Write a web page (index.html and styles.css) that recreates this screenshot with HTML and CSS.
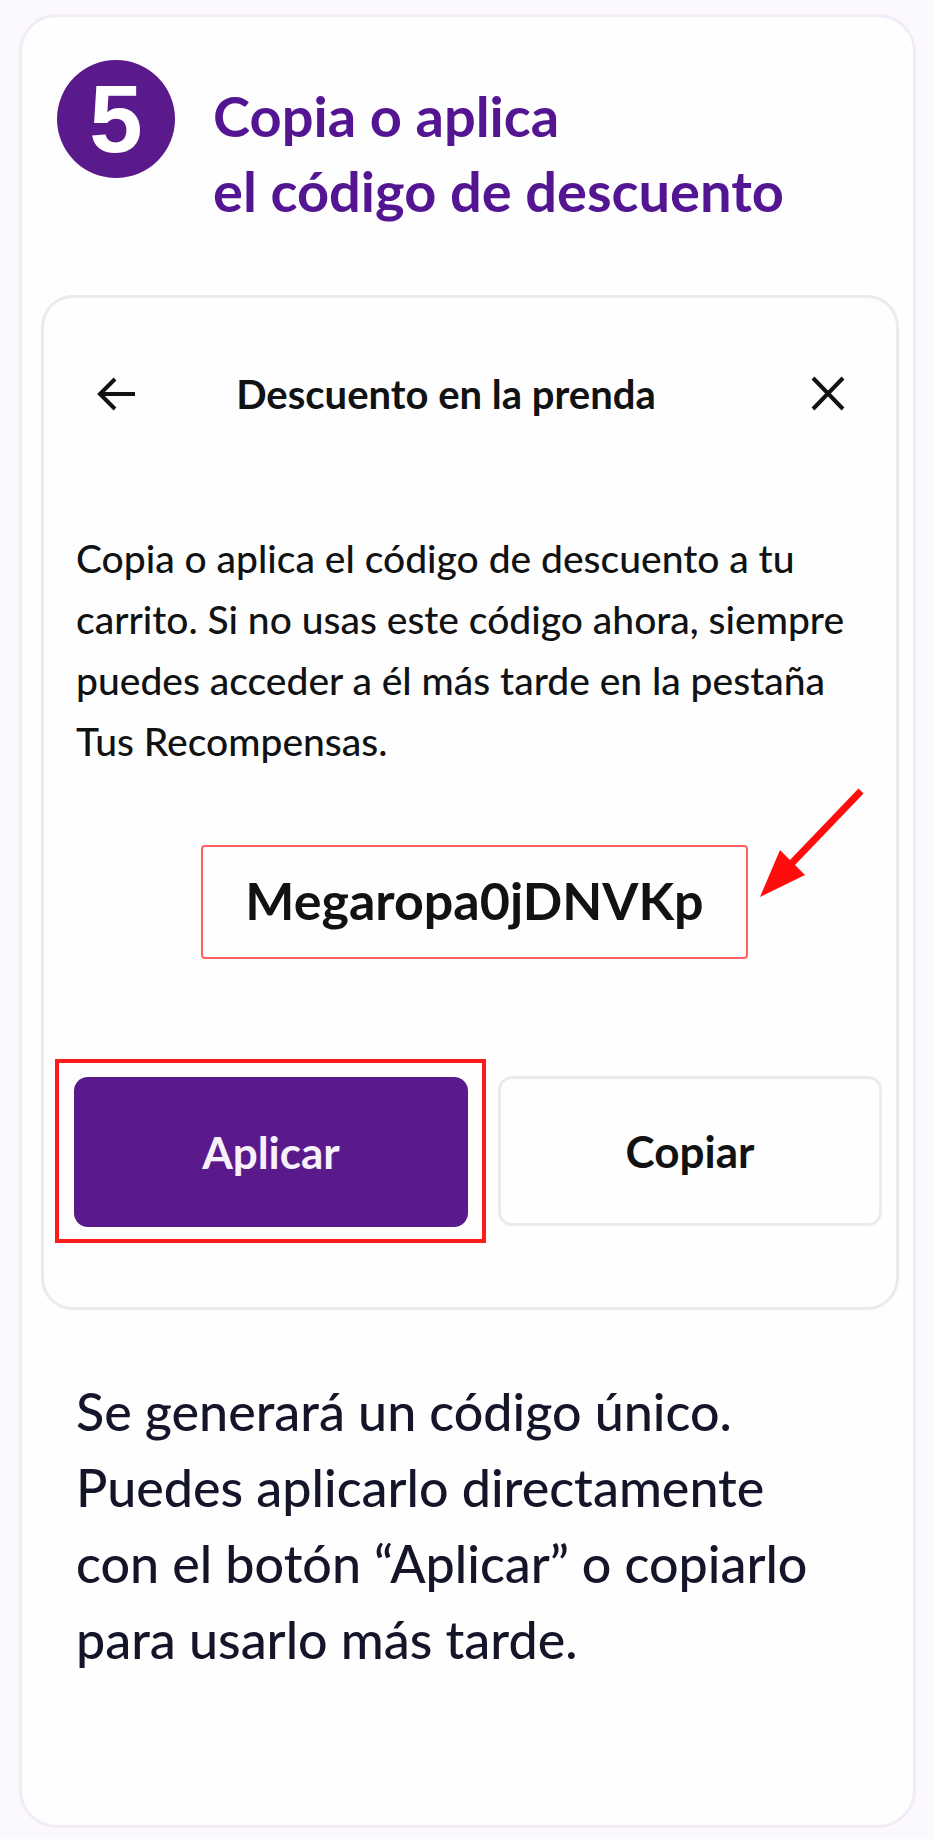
FILE: index.html
```
<!DOCTYPE html>
<html lang="es">
<head>
<meta charset="utf-8">
<meta name="viewport" content="width=device-width, initial-scale=1">
<title>Copia o aplica el código de descuento</title>
<link rel="stylesheet" href="styles.css">
</head>
<body>
<main class="step">
  <header class="step-header">
    <span class="step-number">5</span>
    <h1 class="step-title">Copia o aplica<br>el código de descuento</h1>
  </header>
  <section class="panel">
    <div class="panel-bar">
      <button class="icon-button" type="button" aria-label="Volver">
        <svg width="40" height="40" viewBox="0 0 40 40" fill="none" stroke="currentColor" stroke-width="4"><path d="M39 20H4M19 5L4 20l15 15"/></svg>
      </button>
      <h2 class="panel-title">Descuento en la prenda</h2>
      <button class="icon-button" type="button" aria-label="Cerrar">
        <svg width="40" height="40" viewBox="0 0 40 40" fill="none" stroke="currentColor" stroke-width="4"><path d="M5 4l30 31M35 4L5 35"/></svg>
      </button>
    </div>
    <p class="panel-text">Copia o aplica el código de descuento a tu<br>carrito. Si no usas este código ahora, siempre<br>puedes acceder a él más tarde en la pestaña<br>Tus Recompensas.</p>
    <div class="code-row">
      <output class="code">Megaropa0jDNVKp</output>
      <svg class="pointer" width="110" height="116" viewBox="0 0 110 116"><path d="M103 6L34 78" stroke="#ff0d0d" stroke-width="7" stroke-linecap="butt"/><path d="M2 112L22 65L34 77L47 90Z" fill="#ff0d0d"/></svg>
    </div>
    <div class="actions">
      <div class="highlight"><button class="button button-primary" type="button">Aplicar</button></div>
      <button class="button button-secondary" type="button">Copiar</button>
    </div>
  </section>
  <p class="step-text">Se generará un código único.<br>Puedes aplicarlo directamente<br>con el botón “Aplicar” o copiarlo<br>para usarlo más tarde.</p>
</main>
</body>
</html>
```
FILE: styles.css
```
* {
  box-sizing: border-box;
}

body {
  margin: 0;
  padding: 14px 18px 12px 19px;
  background: #fbf9fd;
  color: #111214;
  font-family: Lato, "Open Sans", sans-serif;
}

h1,
h2,
p {
  margin: 0;
}

button {
  font-family: inherit;
  cursor: pointer;
}

.step {
  padding: 43px 14px 148px 19px;
  border: 3px solid #f1ecf6;
  border-radius: 38px;
  background: #fefefe;
}

.step-header {
  display: flex;
  align-items: flex-start;
  gap: 38px;
  padding-left: 16px;
}

.step-number {
  flex: none;
  width: 118px;
  height: 118px;
  border-radius: 50%;
  background: #5b1a8b;
  color: #fff;
  font: bold 96px/118px "Liberation Sans", Arial, sans-serif;
  text-align: center;
}

.step-title {
  padding-top: 18px;
  color: #531592;
  font-size: 56px;
  line-height: 75px;
}

.panel {
  margin-top: 67px;
  padding: 72px 14px 64px 11px;
  border: 3px solid #ebebef;
  border-radius: 32px;
}

.panel-bar {
  display: grid;
  grid-template-columns: auto 1fr auto;
  align-items: center;
  padding: 0 34px 0 41px;
}

.icon-button {
  display: flex;
  padding: 4px 0;
  border: 0;
  background: none;
  color: #111214;
}

.panel-title {
  padding-right: 52px;
  font-size: 40px;
  line-height: 48px;
  text-align: center;
}

.panel-text {
  margin-top: 110px;
  padding-left: 21px;
  font-size: 39px;
  font-weight: 500;
  line-height: 61px;
}

.code-row {
  display: grid;
  position: relative;
  justify-content: center;
  margin-top: 73px;
  padding-left: 12px;
}

.code {
  padding: 26px 42px 30px;
  border: 2px solid #ff6060;
  border-radius: 4px;
  font-size: 52px;
  font-weight: bold;
  line-height: 54px;
}

.pointer {
  position: absolute;
  top: -60px;
  right: 14px;
}

.actions {
  display: grid;
  grid-template-columns: 432fr 385fr;
  align-items: center;
  gap: 12px;
  margin-top: 100px;
}

.highlight {
  padding: 14px 14px 12px 15px;
  border: 4px solid #ff1b1b;
}

.button {
  width: 100%;
  height: 150px;
  border-radius: 14px;
  font-size: 44px;
  font-weight: bold;
}

.button-primary {
  display: block;
  border: 0;
  background: #5b1a8b;
  color: #f8f1fb;
}

.button-secondary {
  border: 3px solid #ebebef;
  background: #fefefe;
  color: #111214;
}

.step-text {
  margin-top: 63px;
  padding-left: 35px;
  color: #15152a;
  font-size: 52px;
  font-weight: 500;
  line-height: 76px;
}
```
